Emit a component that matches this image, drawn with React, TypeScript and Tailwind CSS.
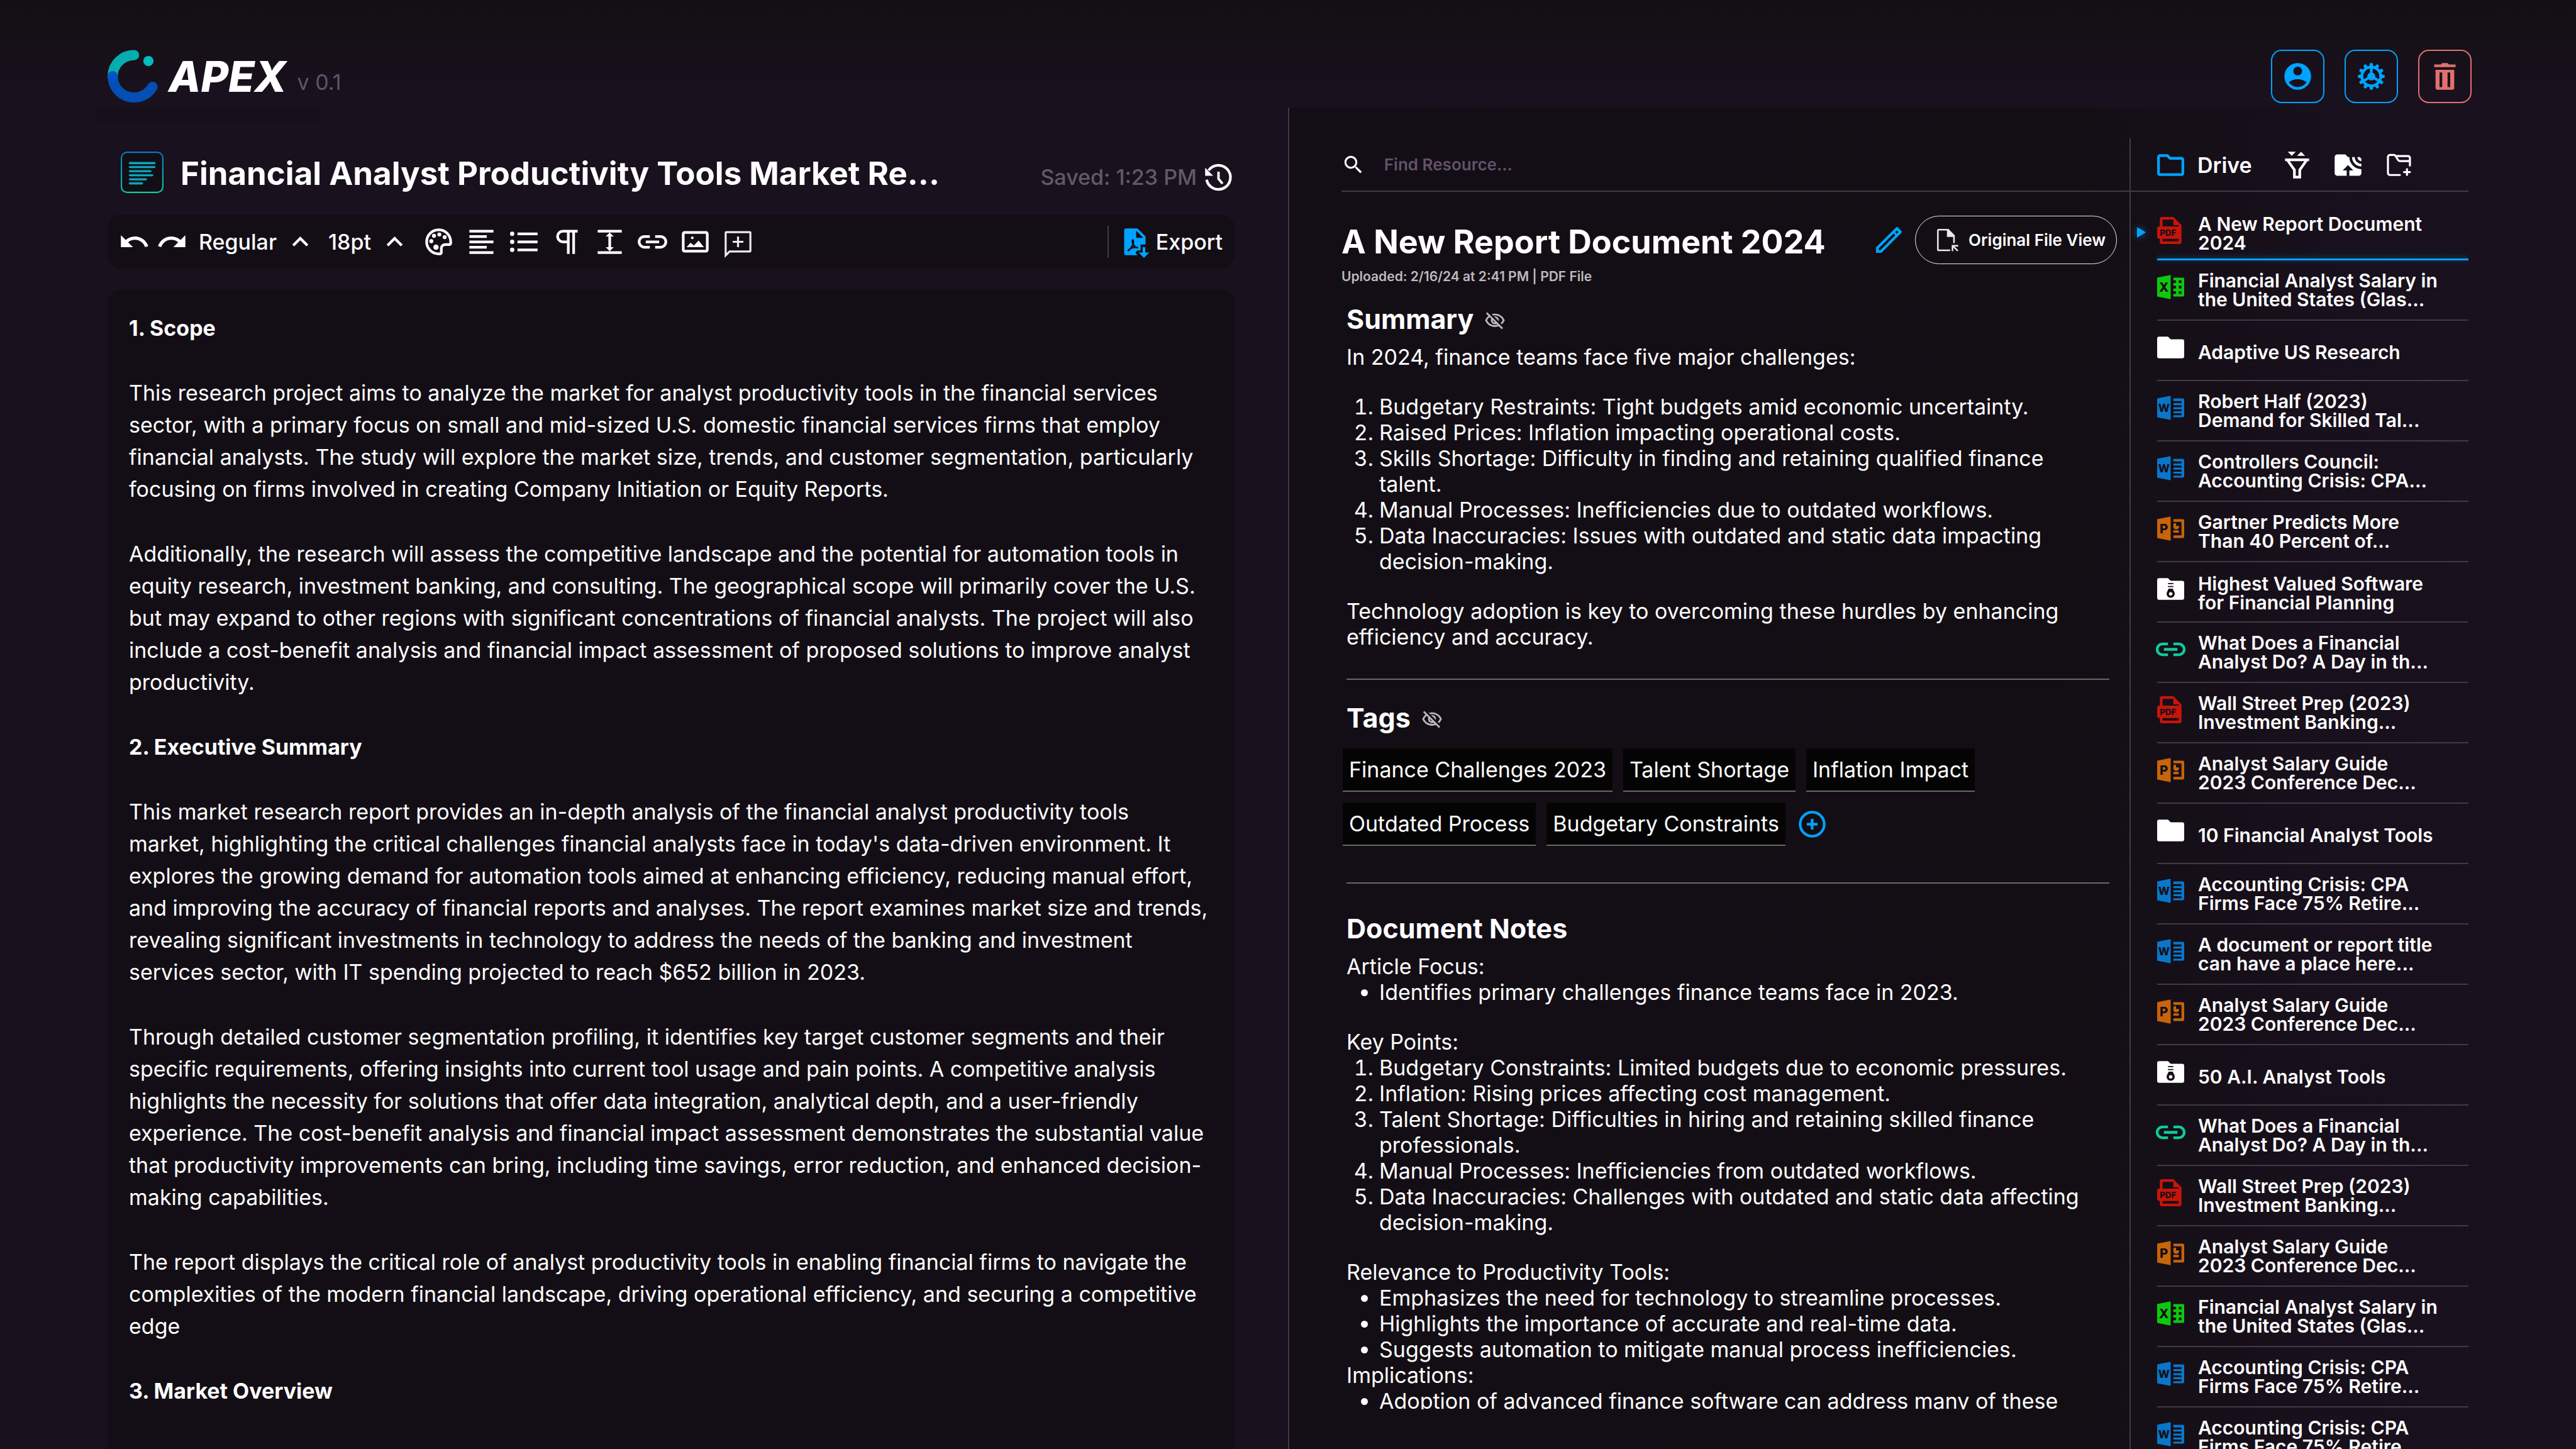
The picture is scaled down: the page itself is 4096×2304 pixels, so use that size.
import React from "react";
import { MdKeyboardArrowUp, MdOutlineVisibilityOff, MdRedo, MdSearch, MdUndo } from "react-icons/md";

type IconProps = { className?: string };

const DARK = "#130e15";

function Logo() {
  return (
    <svg viewBox="0 0 113 119" className="h-[85px] w-[80px] shrink-0" fill="none" strokeWidth="23" strokeLinecap="round" aria-hidden="true">
      <path d="M59.5 11.5A48 48 0 0 0 11.5 59.5" stroke="#05adaf" />
      <path d="M11.5 59.5A48 48 0 0 0 101 83" stroke="#034fb3" />
      <circle cx="11.5" cy="59.5" r="11.5" fill="#0353c2" />
      <circle cx="91.8" cy="25" r="11.5" fill="#03bcbd" />
    </svg>
  );
}

function AccountIcon({ className }: IconProps) {
  return (
    <svg viewBox="0 0 24 24" className={className} fill="currentColor" fillRule="evenodd" aria-hidden="true">
      <path d="M12 2a10 10 0 1 1 0 20 10 10 0 0 1 0-20zm0 2.7a3.3 3.3 0 1 0 0 6.6 3.3 3.3 0 0 0 0-6.6zM5.4 16.4C6.9 18.6 9.3 20 12 20s5.100-1.400 6.600-3.600C17 14.900 14.600 14.100 12 14.100s-5 .8-6.600 2.300z" />
    </svg>
  );
}

const TEETH = [0, 30, 60, 90, 120, 150, 180, 210, 240, 270, 300, 330];

function GearIcon({ className }: IconProps) {
  return (
    <svg viewBox="0 0 24 24" className={className} fill="currentColor" aria-hidden="true">
      <circle cx="12" cy="12" r="7" fill="none" stroke="currentColor" strokeWidth="2" />
      {TEETH.map((a) => (
        <path key={a} transform={`rotate(${a} 12 12)`} d="M11.300 2h1.400a.4.4 0 0 1 .4.3l.5 2.500h-3.200l.5-2.500a.4.4 0 0 1 .4-.3z" />
      ))}
      <circle cx="12" cy="12" r="3" />
      <path d="M12 12V5M12 12l-6 3.500M12 12l6 3.500" stroke="currentColor" strokeWidth="2" />
    </svg>
  );
}

function TrashIcon({ className }: IconProps) {
  return (
    <svg viewBox="0 0 24 24" className={className} fill="currentColor" fillRule="evenodd" aria-hidden="true">
      <path d="M9 3l1-1h4l1 1h5v2H4V3zM5 7h14v13.500a1.500 1.500 0 0 1-1.500 1.500h-11A1.500 1.500 0 0 1 5 20.500zM8 9v11h2V9zM14 9v11h2V9z" />
    </svg>
  );
}

function DocIcon() {
  const widths = [60, 60, 51, 55, 41, 32];
  return (
    <svg viewBox="0 0 96 93" className="h-[66px] w-[68px] shrink-0" aria-hidden="true">
      <defs>
        <linearGradient id="docStroke" x1="0" y1="0" x2="0" y2="1">
          <stop offset="0" stopColor="#0877cb" />
          <stop offset="1" stopColor="#0ecb9b" />
        </linearGradient>
      </defs>
      <rect x="1.5" y="1.5" width="93" height="90" rx="13" fill="#120e15" stroke="url(#docStroke)" strokeWidth="3" />
      {widths.map((w, i) => (
        <rect key={i} x="18" y={23 + i * 9.1} width={w} height="5" rx="2.500" fill="url(#docStroke)" />
      ))}
    </svg>
  );
}

function HistoryIcon({ className }: IconProps) {
  return (
    <svg viewBox="0 0 24 24" className={className} fill="none" stroke="currentColor" strokeWidth="2" aria-hidden="true">
      <path d="M3.100 14A9 9 0 1 0 4.600 7" />
      <path d="M12 8v5.300l3 3.700" strokeWidth="1.800" />
      <path d="M2 5v6h6z" fill="currentColor" stroke="none" />
    </svg>
  );
}

function PaletteIcon({ className }: IconProps) {
  return (
    <svg viewBox="0 0 24 24" className={className} fill="currentColor" aria-hidden="true">
      <path d="M12 21a9 9 0 1 1 9-9v1a1 1 0 0 1-1 1h-3a3 3 0 0 0-3 3v3a1 1 0 0 1-1 1z" fill="none" stroke="currentColor" strokeWidth="2" />
      <circle cx="6.500" cy="11.500" r="1.500" />
      <circle cx="8.500" cy="7.500" r="1.500" />
      <circle cx="12.500" cy="6.500" r="1.500" />
      <circle cx="16.500" cy="8.500" r="1.500" />
      <circle cx="10" cy="16" r="2" />
    </svg>
  );
}

function AlignIcon({ className }: IconProps) {
  return (
    <svg viewBox="0 0 24 24" className={className} fill="currentColor" aria-hidden="true">
      <path d="M3 3h18v2H3zM3 7h13v2H3zM3 11h18v2H3zM3 15h13v2H3zM3 19h18v2H3z" />
    </svg>
  );
}

function ListIcon({ className }: IconProps) {
  return (
    <svg viewBox="0 0 24 24" className={className} fill="currentColor" aria-hidden="true">
      <path d="M7 5h15v2H7zM7 11h15v2H7zM7 17h15v2H7z" />
      <circle cx="3" cy="6" r="1.600" />
      <circle cx="3" cy="12" r="1.600" />
      <circle cx="3" cy="18" r="1.600" />
    </svg>
  );
}

function PilcrowIcon({ className }: IconProps) {
  return (
    <svg viewBox="0 0 24 24" className={className} fill="none" stroke="currentColor" strokeWidth="2" aria-hidden="true">
      <path d="M20 4H9a4 4 0 0 0 0 8h4M13 4v17M17 4v17" />
    </svg>
  );
}

function LineHeightIcon({ className }: IconProps) {
  return (
    <svg viewBox="0 0 24 24" className={className} fill="currentColor" aria-hidden="true">
      <path d="M3 3h18v2H3zM3 19h18v2H3zM12 5l3 3h-2v8h2l-3 3-3-3h2V8H9z" />
    </svg>
  );
}

function LinkIcon({ className }: IconProps) {
  return (
    <svg viewBox="0 0 24 24" className={className} fill="none" stroke="currentColor" strokeWidth="2" aria-hidden="true">
      <path d="M10 8H6a4 4 0 0 0 0 8h4M14 8h4a4 4 0 0 1 0 8h-4M7 12h10" />
    </svg>
  );
}

function ImageIcon({ className }: IconProps) {
  return (
    <svg viewBox="0 0 24 24" className={className} fill="currentColor" aria-hidden="true">
      <rect x="3" y="5" width="18" height="14" rx="1" fill="none" stroke="currentColor" strokeWidth="2" />
      <circle cx="9.800" cy="9" r="1" />
      <path d="M5.500 16l3-3.300 2.500 2 3.500-3.700L18.500 16z" />
    </svg>
  );
}

function CommentIcon({ className }: IconProps) {
  return (
    <svg viewBox="0 0 24 24" className={`${className} overflow-visible`} fill="none" stroke="#e8eaed" strokeWidth="1.500" aria-hidden="true">
      <path d="M2.750 22.200V5.250a.5.5 0 0 1 .5-.5h17.500a.5.5 0 0 1 .5.5v13.500a.5.5 0 0 1-.5.500H5.700z" />
      <path d="M12 8v8M8 12h8" />
    </svg>
  );
}

function ExportIcon({ className }: IconProps) {
  return (
    <svg viewBox="0 0 24 24" className={className} fill="#00a3ff" aria-hidden="true">
      <path fillRule="evenodd" d="M5.500 2H14l6 6v6h-3.700v4.500h-2.500l-1.300 1.600L14 22H5.500A1.500 1.500 0 0 1 4 20.500v-17A1.500 1.500 0 0 1 5.500 2zM13 3.600V9h5.400z" />
      <path d="M10.300 10.700c-.7 2.600 1.400 5.500 3.700 5.700M10.600 10.700c1.200 2.300-1.500 6.700-3.600 8M7.200 18.400c1.400-1.800 3.800-2.500 6.800-2.200" fill="none" stroke={DARK} strokeWidth="1.200" strokeLinecap="round" />
      <path d="M17.800 16h2v4h3l-4 4-4-4h3z" />
    </svg>
  );
}

function PencilIcon({ className }: IconProps) {
  return (
    <svg viewBox="0 0 19 19" className={className} fill="#00a3ff" fillRule="evenodd" aria-hidden="true">
      <path d="M0 19v-4L14.700.3a1 1 0 0 1 1.400 0l2.600 2.600a1 1 0 0 1 0 1.400L4 19zM2 15.800V17h1.200L14.200 6 13 4.800zM14.100 3.700l1.200 1.200 1.200-1.200-1.200-1.200z" />
    </svg>
  );
}

function FileArrowIcon({ className }: IconProps) {
  return (
    <svg viewBox="0 0 16 17" className={className} fill="none" stroke="#e8eaed" strokeWidth="1.200" aria-hidden="true">
      <path d="M9.800 16.100H1.200a.6.6 0 0 1-.6-.6V1.200a.6.600 0 0 1 .6-.6H8.300l4.400 4.500v5.500" />
      <path d="M7.400.2V6h5.800V4.900L8.500.2z" fill="#e8eaed" stroke="none" />
      <path d="M11.600 16.700v-4.100h4.300M11.800 12.800l3.800 3.700" />
    </svg>
  );
}

function AddCircleIcon({ className }: IconProps) {
  return (
    <svg viewBox="0 0 24 24" className={className} fill="none" stroke="#00a3ff" strokeWidth="2" aria-hidden="true">
      <circle cx="12" cy="12" r="9" />
      <path d="M12 8v8M8 12h8" />
    </svg>
  );
}

function DriveIcon({ className }: IconProps) {
  return (
    <svg viewBox="2 2 20 20" className={className} fill="none" stroke="#00a3ff" strokeWidth="2" aria-hidden="true">
      <path d="M4 19a1 1 0 0 1-1-1V6a1 1 0 0 1 1-1h5.600l2 2H20a1 1 0 0 1 1 1v10a1 1 0 0 1-1 1z" />
    </svg>
  );
}

function FilterIcon({ className }: IconProps) {
  return (
    <svg viewBox="0 0 24 24" className={className} fill="currentColor" fillRule="evenodd" aria-hidden="true">
      <path d="M5 2h6L8 5zM12 5h6l-3-3zM3 7h18v2h-1.200L15 15.900V22H9v-6.100L4.200 9H3zM6.500 9 11 15.300V20h2v-4.700L17.500 9z" />
    </svg>
  );
}

function FolderShareIcon({ className }: IconProps) {
  return (
    <svg viewBox="0 0 24 24" className={className} fill="currentColor" aria-hidden="true">
      <path d="M4 4h6l2 2h1a9 9 0 0 0 9 9v3a2 2 0 0 1-2 2h-7v-4h3l-4-4-4 4h3v4H4a2 2 0 0 1-2-2V6a2 2 0 0 1 2-2zM15 6h2a5 5 0 0 0 5 5v2a7 7 0 0 1-7-7zM19 6h2a1 1 0 0 0 1 1v2a3 3 0 0 1-3-3z" />
    </svg>
  );
}

function FolderAddIcon({ className }: IconProps) {
  return (
    <svg viewBox="0 0 24 24" className={className} fill="none" stroke="currentColor" strokeWidth="1.500" strokeLinecap="round" strokeLinejoin="round" aria-hidden="true">
      <path d="M12.700 19.400H5.250a1.500 1.500 0 0 1-1.500-1.500v-12a1.500 1.500 0 0 1 1.500-1.500h2.900a1.500 1.500 0 0 1 1.300.75l1.900 3.100a1.500 1.500 0 0 0 1.300.75h7.400" />
      <path d="M9.500 5.200h9.200a1.500 1.500 0 0 1 1.500 1.500v5.600M15.800 17.200h4.400M18 15v4.400" />
    </svg>
  );
}

type Kind = "pdf" | "xls" | "folder" | "doc" | "ppt" | "zip" | "link";

function KindIcon({ kind }: { kind: Kind }) {
  const cls = "h-[43px] w-[43px] shrink-0 overflow-visible";
  const letter = { fontFamily: "Inter", fontWeight: 800, fill: DARK, textAnchor: "middle" as const };
  if (kind === "pdf") {
    return (
      <svg viewBox="2 2 20 20" className={cls} fill="#c8140a" fillRule="evenodd" aria-label="PDF file">
        <path d="M5.500 2H14l6 6v12.500a1.500 1.500 0 0 1-1.500 1.500h-13A1.500 1.500 0 0 1 4 20.500V18H3.500A1.500 1.500 0 0 1 2 16.500v-6A1.500 1.500 0 0 1 3.500 9H4V3.500A1.500 1.500 0 0 1 5.500 2zM6 4v5h12V8h-4V4zM6 18.200V20h12v-1.800z" />
        <text x="10" y="16" fontSize="6.200" {...letter}>PDF</text>
      </svg>
    );
  }
  if (kind === "xls") {
    return (
      <svg viewBox="2 2 20 20" className={cls} fill="#0dc90d" fillRule="evenodd" aria-label="Spreadsheet">
        <path d="M2 5l10-2v18L2 19zM14 5h7a1 1 0 0 1 1 1v12a1 1 0 0 1-1 1h-7v-2h2v-2h-2v-2h2v-2h-2V9h2V7h-2zM18 7v2h2V7zM18 11v2h2v-2zM18 15v2h2v-2z" />
        <text x="7" y="15.600" fontSize="9.500" {...letter}>X</text>
      </svg>
    );
  }
  if (kind === "doc") {
    return (
      <svg viewBox="2 2 20 20" className={cls} fill="#0877cb" aria-label="Word document">
        <path d="M2 5l10-2v18L2 19zM14 5h7a1 1 0 0 1 1 1v12a1 1 0 0 1-1 1h-7v-1.500h6v-1.500h-6v-1.500h6V13h-6v-1.500h6V10h-6V8.500h6V7h-6z" />
        <text x="7" y="15.200" fontSize="8" {...letter}>W</text>
      </svg>
    );
  }
  if (kind === "ppt") {
    return (
      <svg viewBox="2 2 20 20" className={cls} fill="#c8640a" aria-label="Presentation">
        <path d="M2 5l10-2v18L2 19zM14 5h7a1 1 0 0 1 1 1v12a1 1 0 0 1-1 1h-7v-2h6V7h-6zM14 13.300h4v1.700h-4zM16 8v2h2.200A2.200 2.200 0 0 1 14 11.200V8.600A2.200 2.200 0 0 1 16 8z" />
        <text x="7" y="15.600" fontSize="9.500" {...letter}>P</text>
      </svg>
    );
  }
  if (kind === "link") {
    return (
      <svg viewBox="2 2 20 20" className={cls} fill="none" stroke="#0ecb9b" strokeWidth="2" aria-label="Web link">
        <path d="M10 8H6a4 4 0 0 0 0 8h4M14 8h4a4 4 0 0 1 0 8h-4M7 12h10" />
      </svg>
    );
  }
  return (
    <svg viewBox="2 2 20 20" className={cls} fill="#ffffff" aria-label="Folder">
      <path d="M3.500 4H10l2 2h8.500A1.500 1.500 0 0 1 22 7.500v11a1.500 1.500 0 0 1-1.500 1.500h-17A1.500 1.500 0 0 1 2 18.500v-13A1.500 1.500 0 0 1 3.500 4z" />
      {kind === "zip" && (
        <>
          <path d="M10 8h4M10 10.200h4" stroke={DARK} strokeWidth=".9" />
          <path fillRule="evenodd" fill={DARK} d="M10.500 11.800h3l1.300 2.600a3 3 0 1 1-5.600 0zM12 14.300a1.300 1.300 0 1 0 0 2.600 1.300 1.300 0 0 0 0-2.600z" />
        </>
      )}
    </svg>
  );
}

const FILES: { kind: Kind; lines: string[] }[] = [
  { kind: "pdf", lines: ["A New Report Document", "2024"] },
  { kind: "xls", lines: ["Financial Analyst Salary in", "the United States (Glas..."] },
  { kind: "folder", lines: ["Adaptive US Research"] },
  { kind: "doc", lines: ["Robert Half (2023)", "Demand for Skilled Tal..."] },
  { kind: "doc", lines: ["Controllers Council:", "Accounting Crisis: CPA..."] },
  { kind: "ppt", lines: ["Gartner Predicts More", "Than 40 Percent of..."] },
  { kind: "zip", lines: ["Highest Valued Software", "for Financial Planning"] },
  { kind: "link", lines: ["What Does a Financial", "Analyst Do? A Day in th..."] },
  { kind: "pdf", lines: ["Wall Street Prep (2023)", "Investment Banking..."] },
  { kind: "ppt", lines: ["Analyst Salary Guide", "2023 Conference Dec..."] },
  { kind: "folder", lines: ["10 Financial Analyst Tools"] },
  { kind: "doc", lines: ["Accounting Crisis: CPA", "Firms Face 75% Retire..."] },
  { kind: "doc", lines: ["A document or report title", "can have a place here..."] },
  { kind: "ppt", lines: ["Analyst Salary Guide", "2023 Conference Dec..."] },
  { kind: "zip", lines: ["50 A.I. Analyst Tools"] },
  { kind: "link", lines: ["What Does a Financial", "Analyst Do? A Day in th..."] },
  { kind: "pdf", lines: ["Wall Street Prep (2023)", "Investment Banking..."] },
  { kind: "ppt", lines: ["Analyst Salary Guide", "2023 Conference Dec..."] },
  { kind: "xls", lines: ["Financial Analyst Salary in", "the United States (Glas..."] },
  { kind: "doc", lines: ["Accounting Crisis: CPA", "Firms Face 75% Retire..."] },
  { kind: "doc", lines: ["Accounting Crisis: CPA", "Firms Face 75% Retire..."] },
];

function Header() {
  const btn = "flex h-[85px] w-[85px] items-center justify-center rounded-[17px] border-2";
  return (
    <header className="flex shrink-0 items-center justify-between pt-[79px] pr-[166px] pb-[7px] pl-[171px]">
      <div className="flex items-center">
        <Logo />
        <span className="ml-[17px] text-[67px] leading-[85px] font-extrabold italic">APEX</span>
        <span className="mt-[17px] ml-[17px] text-[34px] leading-[41px] text-[#63516b]">v 0.1</span>
      </div>
      <div className="flex gap-8">
        <button aria-label="Account" className={`${btn} border-[#00a3ff] text-[#00a3ff]`}>
          <AccountIcon className="h-[51px] w-[51px]" />
        </button>
        <button aria-label="Settings" className={`${btn} border-[#00a3ff] text-[#00a3ff]`}>
          <GearIcon className="h-[51px] w-[51px]" />
        </button>
        <button aria-label="Delete" className={`${btn} border-[#e0706e] text-[#e0706e]`}>
          <TrashIcon className="h-[51px] w-[51px]" />
        </button>
      </div>
    </header>
  );
}

function Toolbar() {
  const icon = "h-[51px] w-[51px]";
  return (
    <div className="mt-[34px] flex h-[86px] shrink-0 items-center rounded-[21px] bg-[#130e15] pr-[19px] pl-[17px] text-[34px] leading-[41px] font-medium">
      <div className="flex gap-[9px]">
        <button aria-label="Undo"><MdUndo className={icon} /></button>
        <button aria-label="Redo"><MdRedo className={icon} /></button>
      </div>
      <label className="ml-[17px] flex items-center gap-[11px]">
        <select aria-label="Font weight" className="appearance-none bg-transparent">
          <option>Regular</option>
        </select>
        <MdKeyboardArrowUp className={icon} />
      </label>
      <label className="ml-[19px] flex items-center gap-[11px]">
        <select aria-label="Font size" className="appearance-none bg-transparent">
          <option>18pt</option>
        </select>
        <MdKeyboardArrowUp className={icon} />
      </label>
      <div className="ml-[19px] flex gap-[17px]">
        <button aria-label="Text colour"><PaletteIcon className={icon} /></button>
        <button aria-label="Align left"><AlignIcon className={icon} /></button>
        <button aria-label="Bulleted list"><ListIcon className={icon} /></button>
        <button aria-label="Paragraph"><PilcrowIcon className={icon} /></button>
        <button aria-label="Line height"><LineHeightIcon className={icon} /></button>
        <button aria-label="Insert link"><LinkIcon className={icon} /></button>
        <button aria-label="Insert image"><ImageIcon className={icon} /></button>
        <button aria-label="Add comment"><CommentIcon className={icon} /></button>
      </div>
      <div className="ml-auto h-[51px] border-l-2 border-[#3f3b41]" />
      <button className="ml-[16px] flex items-center gap-[8px]">
        <ExportIcon className={icon} />
        Export
      </button>
    </div>
  );
}

function Editor() {
  return (
    <section className="flex min-h-0 flex-col pr-[85px] pl-[171px]">
      <div className="-ml-[18px] h-[25px] w-[355px] shrink-0 bg-[#170f1a]" />
      <div className="mt-[45px] flex shrink-0 items-center pl-[21px]">
        <DocIcon />
        <h1 className="ml-[27px] pt-[4px] text-[51px] leading-[62px] font-bold">Financial Analyst Productivity Tools Market Re...</h1>
        <div className="ml-auto flex items-center gap-[9px] pt-[15px]">
          <span className="text-[34px] leading-[41px] font-medium text-[#5f5c61]">Saved: 1:23 PM</span>
          <button aria-label="Version history"><HistoryIcon className="h-[51px] w-[51px]" /></button>
        </div>
      </div>
      <Toolbar />
      <article className="mt-[34px] flex min-h-0 flex-1 flex-col gap-[52px] overflow-hidden rounded-t-[21px] bg-[#130e15] pt-[35px] pr-[32px] pl-[34px] text-[34px] leading-[51px]">
        <h2 className="font-bold">1. Scope</h2>
        <p>
          This research project aims to analyze the market for analyst productivity tools in the financial services sector, with a primary focus on small and mid-sized U.S. domestic financial services firms that employ financial analysts. The study will explore the market size, trends, and customer segmentation, particularly focusing on firms involved in creating Company Initiation or Equity Reports.
        </p>
        <p>
          Additionally, the research will assess the competitive landscape and the potential for automation tools in equity research, investment banking, and consulting. The geographical scope will primarily cover the U.S. but may expand to other regions with significant concentrations of financial analysts. The project will also include a cost-benefit analysis and financial impact assessment of proposed solutions to improve analyst productivity.
        </p>
        <h2 className="font-bold">2. Executive Summary</h2>
        <p>
          This market research report provides an in-depth analysis of the financial analyst productivity tools <br />
          market, highlighting the critical challenges financial analysts face in today's data-driven environment. It explores the growing demand for automation tools aimed at enhancing efficiency, reducing manual effort, and improving the accuracy of financial reports and analyses. The report examines market size and trends, revealing significant investments in technology to address the needs of the banking and investment services sector, with IT spending projected to reach $652 billion in 2023.
        </p>
        <p>
          Through detailed customer segmentation profiling, it identifies key target customer segments and their specific requirements, offering insights into current tool usage and pain points. A competitive analysis highlights the necessity for solutions that offer data integration, analytical depth, and a user-friendly experience. The cost-benefit analysis and financial impact assessment demonstrates the substantial value that productivity improvements can bring, including time savings, error reduction, and enhanced decision-making capabilities.
        </p>
        <p>
          The report displays the critical role of analyst productivity tools in enabling financial firms to navigate the complexities of the modern financial landscape, driving operational efficiency, and securing a competitive edge
        </p>
        <h2 className="font-bold">3. Market Overview</h2>
      </article>
    </section>
  );
}

function SectionTitle({ children, hide }: { children: string; hide?: boolean }) {
  return (
    <div className="flex items-center gap-[17px]">
      <h3 className="text-[43px] leading-[52px] font-bold">{children}</h3>
      {hide && (
        <button aria-label={`Hide ${children}`} className="pt-[5px] text-[#bdbabd]">
          <MdOutlineVisibilityOff className="h-[34px] w-[34px]" />
        </button>
      )}
    </div>
  );
}

const TAGS = ["Finance Challenges 2023", "Talent Shortage", "Inflation Impact", "Outdated Process", "Budgetary Constraints"];

function Resource() {
  return (
    <section className="flex min-h-0 min-w-0 flex-1 flex-col pb-[63px] pl-[83px]">
      <label className="flex h-[85px] shrink-0 items-center gap-[30px] border-b-2 border-[#3f3b41]">
        <MdSearch className="h-[40px] w-[40px]" />
        <input
          type="search"
          aria-label="Find Resource"
          placeholder="Find Resource..."
          className="w-full bg-transparent text-[26px] leading-[32px] font-semibold outline-none placeholder:text-[#63516b]"
        />
      </label>
      <div className="min-h-0 flex-1 overflow-hidden pr-[20px]">
        <div className="mt-[38px] flex items-center">
          <h2 className="pt-[6px] text-[52px] leading-[62px] font-bold">A New Report Document 2024</h2>
          <button aria-label="Rename" className="ml-auto"><PencilIcon className="h-[41px] w-[41px]" /></button>
          <button className="ml-[21px] flex h-[77px] items-center gap-[16px] rounded-full border border-[#e8eaed] pr-[17px] pl-[34px] text-[26px] leading-[32px] font-semibold">
            <FileArrowIcon className="h-[36px] w-[34px]" />
            Original File View
          </button>
        </div>
        <p className="mt-[7px] text-[21px] leading-[26px] font-semibold text-[#bdbabd]">Uploaded: 2/16/24 at 2:41 PM | PDF File</p>

        <div className="mt-[28px] pr-[12px] pl-[8px] text-[34px] leading-[41px]">
          <SectionTitle hide>Summary</SectionTitle>
          <p className="mt-[14px]">In 2024, finance teams face five major challenges:</p>
          <ol className="mt-[38px] list-decimal pl-[52px]">
            <li>Budgetary Restraints: Tight budgets amid economic uncertainty.</li>
            <li>Raised Prices: Inflation impacting operational costs.</li>
            <li>Skills Shortage: Difficulty in finding and retaining qualified finance talent.</li>
            <li>Manual Processes: Inefficiencies due to outdated workflows.</li>
            <li>Data Inaccuracies: Issues with outdated and static data impacting decision-making.</li>
          </ol>
          <p className="mt-[38px]">Technology adoption is key to overcoming these hurdles by enhancing efficiency and accuracy.</p>
          <hr className="mt-[46px] border-t-2 border-[#6a676b]" />

          <div className="mt-[34px]">
            <SectionTitle hide>Tags</SectionTitle>
          </div>
          <ul className="mt-[23px] -ml-[6px] flex max-w-[1100px] flex-wrap items-center gap-[17px]">
            {TAGS.map((tag) => (
              <li key={tag} className="flex h-[69px] items-center border-b-2 border-[#6a676b] bg-[#050405] px-[10px]">{tag}</li>
            ))}
            <li className="flex">
              <button aria-label="Add tag"><AddCircleIcon className="h-[51px] w-[51px]" /></button>
            </li>
          </ul>
          <hr className="mt-[58px] border-t-2 border-[#6a676b]" />

          <div className="mt-[45px]">
            <SectionTitle>Document Notes</SectionTitle>
          </div>
          <p className="mt-[14px]">Article Focus:</p>
          <ul className="list-disc pl-[52px]">
            <li>Identifies primary challenges finance teams face in 2023.</li>
          </ul>
          <p className="mt-[38px]">Key Points:</p>
          <ol className="list-decimal pl-[52px]">
            <li>Budgetary Constraints: Limited budgets due to economic pressures.</li>
            <li>Inflation: Rising prices affecting cost management.</li>
            <li>Talent Shortage: Difficulties in hiring and retaining skilled finance professionals.</li>
            <li>Manual Processes: Inefficiencies from outdated workflows.</li>
            <li>Data Inaccuracies: Challenges with outdated and static data affecting decision-making.</li>
          </ol>
          <p className="mt-[38px]">Relevance to Productivity Tools:</p>
          <ul className="list-disc pl-[52px]">
            <li>Emphasizes the need for technology to streamline processes.</li>
            <li>Highlights the importance of accurate and real-time data.</li>
            <li>Suggests automation to mitigate manual process inefficiencies.</li>
          </ul>
          <p>Implications:</p>
          <ul className="list-disc pl-[52px]">
            <li>Adoption of advanced finance software can address many of these</li>
          </ul>
        </div>
      </div>
    </section>
  );
}

function Drive() {
  const icon = "h-[51px] w-[51px]";
  return (
    <aside className="flex min-h-0 w-[710px] shrink-0 flex-col border-l-2 border-[#3f3b41] pr-[171px]">
      <div className="flex h-[85px] shrink-0 items-center border-b-2 border-[#3f3b41] pt-[2px] pl-[42px]">
        <DriveIcon className="h-[43px] w-[43px]" />
        <h2 className="ml-[21px] text-[34px] leading-[41px] font-semibold">Drive</h2>
        <div className="ml-[46px] flex gap-[30px]">
          <button aria-label="Filter"><FilterIcon className={icon} /></button>
          <button aria-label="Upload to folder"><FolderShareIcon className={icon} /></button>
          <button aria-label="New folder"><FolderAddIcon className={icon} /></button>
        </div>
      </div>
      <ul className="min-h-0 flex-1 overflow-hidden pl-[42px] text-[30px] leading-[30px] font-semibold">
        {FILES.map((file, i) => {
          const active = i === 0;
          const single = file.lines.length === 1;
          return (
            <li
              key={i}
              className={active ? "relative h-[109px] pt-[36px]" : "h-[96px] border-b-2 border-[#3f3b41] pt-[17px]"}
            >
              {active && (
                <>
                  <svg viewBox="0 0 14 17" className="absolute top-[56px] -left-[32px] h-[17px] w-[14px] overflow-visible drop-shadow-[0_0_6px_rgba(0,163,255,0.6)]" fill="#00a3ff" aria-hidden="true">
                    <path d="M0 0l14 8.500L0 17z" />
                  </svg>
                  <span className="absolute inset-x-0 bottom-0 h-[3px] bg-[#00a3ff] shadow-[0_-1px_9px_rgba(0,163,255,0.5)]" />
                </>
              )}
              <a href="#" className="flex items-start gap-[22px]">
                <span className="pt-[4px]"><KindIcon kind={file.kind} /></span>
                <span className={single ? "pt-[18px]" : file.kind === "zip" ? "pt-[2px]" : ""}>
                  {file.lines.map((l) => (
                    <span key={l} className="block whitespace-nowrap">{l}</span>
                  ))}
                </span>
              </a>
            </li>
          );
        })}
      </ul>
    </aside>
  );
}

export default function App() {
  return (
    <div className="flex h-screen flex-col overflow-hidden bg-[#19111d] bg-[linear-gradient(to_bottom,#130f13_0px,#19111d_150px)] font-['Inter',sans-serif] text-white">
      <Header />
      <main className="grid min-h-0 flex-1 grid-cols-2">
        <Editor />
        <div className="flex min-h-0 border-l-2 border-[#3f3b41] bg-[linear-gradient(to_right,#130e15_0%,#130e14_60%,#18101c_80%,#19111d_100%)] pt-[49px]">
          <Resource />
          <Drive />
        </div>
      </main>
    </div>
  );
}
